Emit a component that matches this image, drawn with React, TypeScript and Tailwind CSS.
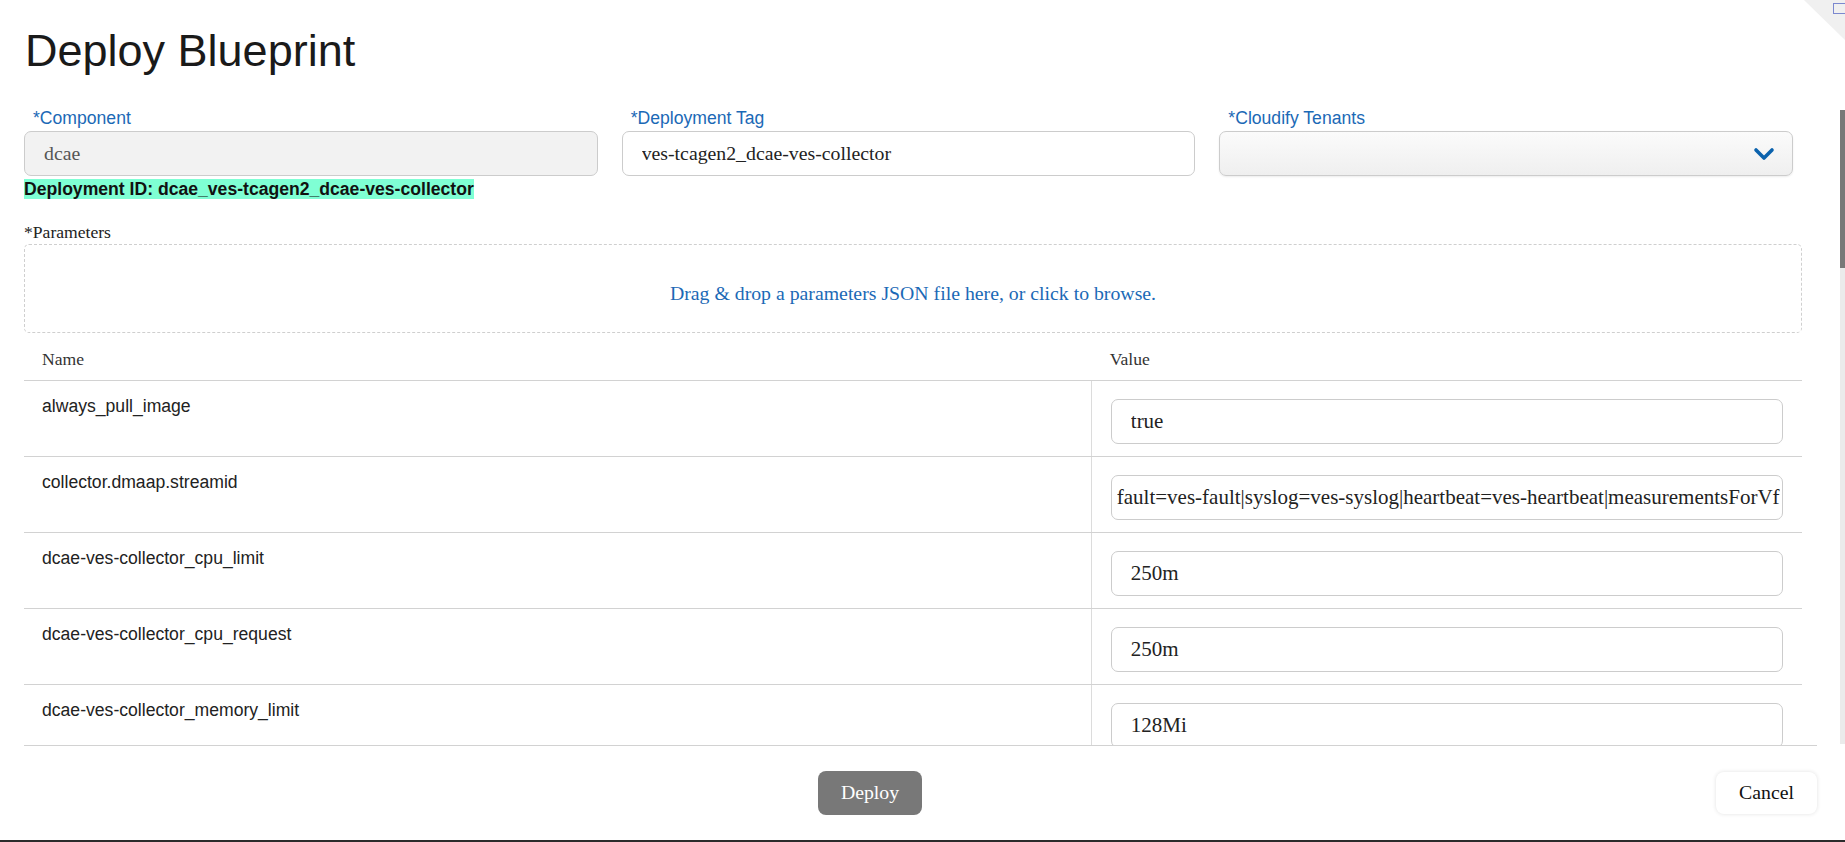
const SANS = "font-['Liberation_Sans',Arial,sans-serif]";
const SERIF = "font-['Liberation_Serif','Times_New_Roman',serif]";

type Param = { name: string; value: string; scrolled?: boolean };

const PARAMS: Param[] = [
  { name: 'always_pull_image', value: 'true' },
  {
    name: 'collector.dmaap.streamid',
    value: 'fault=ves-fault|syslog=ves-syslog|heartbeat=ves-heartbeat|measurementsForVf',
    scrolled: true,
  },
  { name: 'dcae-ves-collector_cpu_limit', value: '250m' },
  { name: 'dcae-ves-collector_cpu_request', value: '250m' },
  { name: 'dcae-ves-collector_memory_limit', value: '128Mi' },
];

function FieldLabel({ children }: { children: string }) {
  return (
    <div className={`${SANS} pl-[9px] text-[17.6px] leading-[20px] text-[#1b69b6]`}>{children}</div>
  );
}

export default function App() {
  return (
    <div className="relative flex h-[842px] w-full flex-col overflow-hidden border-b-2 border-[#2b2b2b] bg-white">
      {/* folded corner in the top right */}
      <svg className="absolute right-0 top-0" width="41" height="41" viewBox="0 0 41 41">
        <polygon points="0,0 41,0 41,40" fill="#f0f0f0" />
        <rect x="29.5" y="3.5" width="13" height="10" fill="none" stroke="#7c88cf" strokeWidth="1" />
      </svg>

      <h1 className={`${SANS} h-[108px] shrink-0 pl-[25px] pt-[26px] text-[45px] leading-[50px] text-[#1a1a1a]`}>
        Deploy Blueprint
      </h1>

      {/* Body */}
      <div className="flex h-[638px] shrink-0">
        <div className="ml-[24px] w-[1793px] overflow-hidden border-b border-[#d2d2d2]">
          <div className="grid grid-cols-3">
            <div className="pr-[24px]">
              <FieldLabel>*Component</FieldLabel>
              <div
                className={`${SERIF} mt-[3px] flex h-[45px] items-center rounded-[7px] border border-[#cccccc] bg-[#f2f2f2] pl-[19px] text-[19.8px] text-[#555]`}
              >
                dcae
              </div>
              <div className="mt-[1px]">
                <span className={`${SANS} bg-[#7fffd4] text-[17.6px] font-bold leading-[20px] text-[#111]`}>
                  Deployment ID: dcae_ves-tcagen2_dcae-ves-collector
                </span>
              </div>
            </div>
            <div className="pr-[24px]">
              <FieldLabel>*Deployment Tag</FieldLabel>
              <input
                readOnly
                value="ves-tcagen2_dcae-ves-collector"
                className={`${SERIF} mt-[3px] block h-[45px] w-full rounded-[7px] border border-[#cccccc] bg-white px-[19px] text-[19.8px] text-[#222] outline-none`}
              />
            </div>
            <div className="pr-[24px]">
              <FieldLabel>*Cloudify Tenants</FieldLabel>
              <div className="mt-[3px] flex h-[45px] items-center justify-end rounded-[7px] border border-[#cccccc] bg-gradient-to-b from-[#fbfbfb] to-[#efefef] pr-[17px] shadow-[0_1px_2px_rgba(0,0,0,0.08)]">
                <svg width="22" height="14" viewBox="0 0 22 14">
                  <polyline
                    points="3,3 11,11 19,3"
                    fill="none"
                    stroke="#0b62ad"
                    strokeWidth="3.6"
                    strokeLinecap="round"
                    strokeLinejoin="round"
                  />
                </svg>
              </div>
            </div>
          </div>

          <div className={`${SERIF} mt-[21px] text-[17.6px] leading-[20px] text-[#222]`}>*Parameters</div>
          <div
            className={`${SERIF} mr-[15px] mt-[2px] h-[89px] rounded-[5px] border border-dashed border-[#cfcfcf] pt-[37px] text-center text-[19.8px] leading-[23px] text-[#1b69b6]`}
          >
            Drag &amp; drop a parameters JSON file here, or click to browse.
          </div>

          {/* Parameter table */}
          <div className="mr-[15px]">
            <div className={`${SERIF} flex h-[48px] border-b border-[#d2d2d2] text-[17.6px] leading-[20px] text-[#333]`}>
              <div className="w-[60%] pl-[18px] pt-[16px]">Name</div>
              <div className="flex-1 pl-[19px] pt-[16px]">Value</div>
            </div>
            {PARAMS.map((p) => (
              <div key={p.name} className="flex h-[76px] border-b border-[#d2d2d2]">
                <div className={`${SANS} w-[60%] pl-[18px] pt-[15px] text-[17.6px] leading-[20px] text-[#222]`}>
                  {p.name}
                </div>
                <div className="flex-1 border-l border-[#dcdcdc] px-[19px] pt-[18px]">
                  <input
                    readOnly
                    value={p.value}
                    className={`${SERIF} block h-[45px] w-full rounded-[7px] border border-[#cccccc] bg-white ${
                      p.scrolled ? 'pl-[5px] pr-[2px]' : 'px-[19px]'
                    } text-[21px] text-[#222] outline-none`}
                  />
                </div>
              </div>
            ))}
          </div>
        </div>

        {/* scrollbar */}
        <div className="ml-auto flex w-[5px] flex-col pb-[2px] pt-[2px]">
          <div className="h-[158px] bg-[#787878]" />
          <div className="flex-1 bg-[#ebebeb]" />
        </div>
      </div>

      {/* Footer */}
      <div className="ml-[24px] flex h-[94px] w-[1793px] shrink-0 items-center">
        <div className="flex flex-1 justify-center">
          <button
            className={`${SERIF} h-[44px] w-[104px] rounded-[8px] bg-[#787878] text-[19.8px] text-white`}
          >
            Deploy
          </button>
        </div>
        <button
          className={`${SERIF} h-[42px] w-[101px] rounded-[8px] bg-white text-[19.8px] text-[#111] shadow-[0_0_4px_rgba(0,0,0,0.12)]`}
        >
          Cancel
        </button>
      </div>
    </div>
  );
}
